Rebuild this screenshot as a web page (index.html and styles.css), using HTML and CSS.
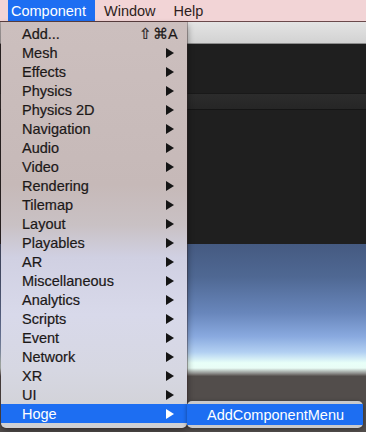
FILE: index.html
```html
<!DOCTYPE html>
<html>
<head>
<meta charset="utf-8">
<link rel="stylesheet" href="styles.css">
</head>
<body>
<div class="screen">
  <div class="menubar">
    <span class="mtitle active">Component</span>
    <span class="mtitle">Window</span>
    <span class="mtitle">Help</span>
  </div>
  <div class="app">
    <div class="toolbar"></div>
    <div class="dark dark1"></div>
    <div class="tabbar"></div>
    <div class="dark dark2"></div>
    <div class="sky"></div>
    <div class="ground"></div>
  </div>

  <div class="menu">
    <div class="item"><span>Add...</span><span class="shortcut">⇧⌘A</span></div>
    <div class="item"><span>Mesh</span><span class="arrow"></span></div>
    <div class="item"><span>Effects</span><span class="arrow"></span></div>
    <div class="item"><span>Physics</span><span class="arrow"></span></div>
    <div class="item"><span>Physics 2D</span><span class="arrow"></span></div>
    <div class="item"><span>Navigation</span><span class="arrow"></span></div>
    <div class="item"><span>Audio</span><span class="arrow"></span></div>
    <div class="item"><span>Video</span><span class="arrow"></span></div>
    <div class="item"><span>Rendering</span><span class="arrow"></span></div>
    <div class="item"><span>Tilemap</span><span class="arrow"></span></div>
    <div class="item"><span>Layout</span><span class="arrow"></span></div>
    <div class="item"><span>Playables</span><span class="arrow"></span></div>
    <div class="item"><span>AR</span><span class="arrow"></span></div>
    <div class="item"><span>Miscellaneous</span><span class="arrow"></span></div>
    <div class="item"><span>Analytics</span><span class="arrow"></span></div>
    <div class="item"><span>Scripts</span><span class="arrow"></span></div>
    <div class="item"><span>Event</span><span class="arrow"></span></div>
    <div class="item"><span>Network</span><span class="arrow"></span></div>
    <div class="item"><span>XR</span><span class="arrow"></span></div>
    <div class="item"><span>UI</span><span class="arrow"></span></div>
    <div class="item selected"><span>Hoge</span><span class="arrow"></span></div>
  </div>

  <div class="submenu">
    <div class="subitem">AddComponentMenu</div>
  </div>
</div>
</body>
</html>
```

FILE: styles.css
```css
* { box-sizing: border-box; }
html, body { margin: 0; padding: 0; }
body {
  font-family: "Liberation Sans", Arial, sans-serif;
  width: 366px;
  height: 432px;
  overflow: hidden;
}
.screen {
  position: relative;
  width: 366px;
  height: 432px;
  overflow: hidden;
  background: #524d4b;
}
.menubar {
  height: 22px;
  background: #f2d4d6;
  border-bottom: 1px solid #6b4a4c;
  display: flex;
  align-items: stretch;
  padding-left: 8px;
  font-size: 14.5px;
  color: #2e1e20;
}
.mtitle {
  display: flex;
  align-items: center;
  padding: 0 9px 0 3px;
}
.mtitle + .mtitle { padding-left: 9px; }
.mtitle.active {
  background: #1d6ef2;
  color: #fff;
}
.app {
  display: flex;
  flex-direction: column;
}
.toolbar {
  height: 22px;
  background: linear-gradient(#e4e4e4, #d2d2d2);
  border-bottom: 1px solid #8c8c8c;
}
.dark { background: #1f1f1f; }
.dark1 { height: 49px; }
.tabbar {
  height: 17px;
  background: linear-gradient(#2c2c2c, #262626);
  border-top: 1px solid #191919;
  border-bottom: 1px solid #151515;
}
.dark2 { height: 134px; }
.sky {
  height: 132px;
  background: linear-gradient(#455a81 0%, #4f6893 25%, #6886bb 52%, #89a9df 70%, #b2d0f2 82%, #e8fff8 90%, #e9fdf6 94%, #8e8e8c 98%, #57524f 100%);
}
.ground {
  flex: 1;
  background: #534e4c;
}
.menu {
  position: absolute;
  left: 1px;
  top: 22px;
  width: 186px;
  padding: 2px 0 5px;
  background: linear-gradient(#ccbfbe 0%, #c6b9b8 40%, #c9c1c4 50%, #d0d0e2 58%, #d8d9ea 72%, #d6d7e2 86%, #d0d0d3 100%);
  border-radius: 0 0 5px 5px;
  box-shadow: 0 0 0 1px rgba(60,40,40,0.35), 1px 3px 6px rgba(0,0,0,0.35);
  font-size: 14.5px;
  color: #1c1818;
}
.item {
  height: 19px;
  display: flex;
  align-items: center;
  justify-content: space-between;
  padding: 0 12px 0 21px;
  -webkit-text-stroke: 0.2px #1c1818;
}
.shortcut {
  letter-spacing: 0.3px;
  margin-right: -3px;
}
.arrow {
  width: 0;
  height: 0;
  border-top: 5px solid transparent;
  border-bottom: 5px solid transparent;
  border-left: 8px solid #141414;
  margin-right: 1px;
}
.item.selected {
  background: #1d6ef2;
  color: #fff;
  -webkit-text-stroke: 0;
}
.item.selected .arrow { border-left-color: #fff; }
.submenu {
  position: absolute;
  left: 187px;
  top: 401px;
  width: 176px;
  height: 27px;
  padding: 3px 0 3px;
  background: #c9c9cb;
  border-radius: 5px;
  box-shadow: 0 1px 4px rgba(0,0,0,0.4);
}
.subitem {
  height: 21px;
  background: #1d6ef2;
  color: #fff;
  font-size: 14.5px;
  display: flex;
  align-items: center;
  padding-left: 20px;
}
```
